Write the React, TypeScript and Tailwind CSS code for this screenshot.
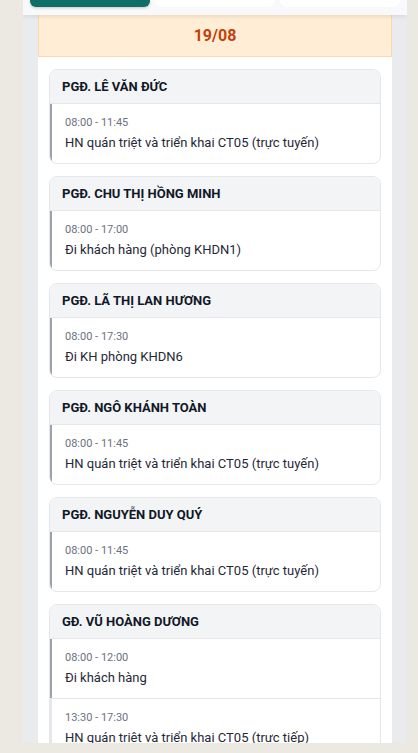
import React from "react";

type Item = { time: string; text: string; muted?: boolean };
type Person = { name: string; items: Item[] };

const people: Person[] = [
    { name: "PGĐ. Lê Văn Đức", items: [{ time: "08:00 - 11:45", text: "HN quán triệt và triển khai CT05 (trực tuyến)" }] },
    { name: "PGĐ. Chu Thị Hồng Minh", items: [{ time: "08:00 - 17:00", text: "Đi khách hàng (phòng KHDN1)" }] },
    { name: "PGĐ. Lã Thị Lan Hương", items: [{ time: "08:00 - 17:30", text: "Đi KH phòng KHDN6" }] },
    { name: "PGĐ. Ngô Khánh Toàn", items: [{ time: "08:00 - 11:45", text: "HN quán triệt và triển khai CT05 (trực tuyến)" }] },
    { name: "PGĐ. Nguyễn Duy Quý", items: [{ time: "08:00 - 11:45", text: "HN quán triệt và triển khai CT05 (trực tuyến)" }] },
    {
        name: "GĐ. Vũ Hoàng Dương",
        items: [
            { time: "08:00 - 12:00", text: "Đi khách hàng" },
            { time: "13:30 - 17:30", text: "HN quán triệt và triển khai CT05 (trực tiếp)", muted: true },
        ],
    },
];

function PersonCard({ person }: { person: Person }) {
    return (
        <div className="rounded-lg border border-[#e5e7eb] bg-white overflow-hidden">
            <div className="h-[34px] bg-[#f3f4f6] border-b border-[#e5e7eb] px-3 flex items-center">
                <h3 className="text-[13px] font-bold uppercase text-[#111827]">{person.name}</h3>
            </div>
            {person.items.map((it, i) => (
                <div
                    key={i}
                    className={`-ml-px border-l-[3px] pl-[13px] pr-3 pt-3 pb-[11px] ${
                        it.muted ? "border-l-[#e5e7eb]" : "border-l-[#9ca3af]"
                    } ${i > 0 ? "border-t border-t-[#e5e7eb]" : ""}`}
                >
                    <div className="text-[11px] leading-[14px] text-[#6b7280]">{it.time}</div>
                    <div className="mt-1 text-[13px] leading-[18px] text-[#1f2937]">{it.text}</div>
                </div>
            ))}
        </div>
    );
}

export default function App() {
    return (
        <div className="min-h-screen bg-[#ece8e2] font-['Roboto',sans-serif]">
            <div className="ml-[23px] w-[384px] h-[743px] overflow-hidden bg-[#e9ebef] flex flex-col">
                <div className="relative z-10 bg-[#f8f9fb] px-[7px] pb-2 grid grid-cols-3 gap-[5px] shadow-[0_2px_4px_rgba(0,0,0,0.08)]">
                    <div className="h-[7px] rounded-b-md bg-[#0f6e67] shadow-[0_1px_3px_rgba(0,0,0,0.2)]"></div>
                    <div className="h-[7px] rounded-b-md bg-white"></div>
                    <div className="h-[7px] rounded-b-md bg-white"></div>
                </div>
                <div className="mx-[15px] flex-1 bg-white">
                    <div className="h-[42px] bg-[#ffedd5] border-x border-b border-[#fed7aa] flex items-center justify-center">
                        <span className="text-[16px] font-bold text-[#c2410c]">19/08</span>
                    </div>
                    <div className="px-[11px] pt-3 flex flex-col gap-3">
                        {people.map((p, i) => (
                            <PersonCard key={i} person={p} />
                        ))}
                    </div>
                </div>
            </div>
        </div>
    );
}
